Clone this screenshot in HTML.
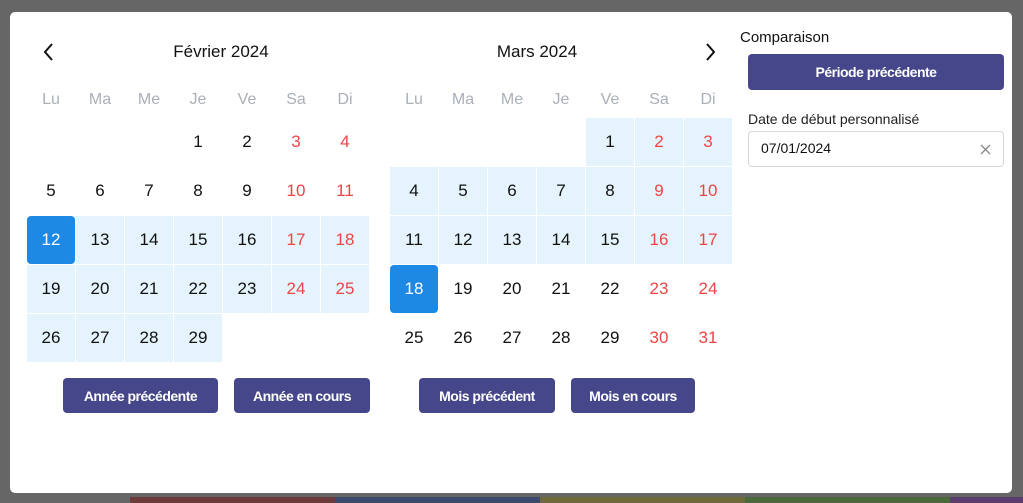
<!DOCTYPE html>
<html><head><meta charset="utf-8"><style>
*{box-sizing:border-box;margin:0;padding:0}
body{width:1023px;height:503px;background:#666;font-family:"Liberation Sans",sans-serif;position:relative;overflow:hidden}
.strip{position:absolute;top:497px;height:6px}
.modal{position:absolute;left:10px;top:12px;width:1002px;height:481px;background:#fff;border-radius:5px}
.a{position:absolute}
.title{font-size:17px;color:#111;text-align:center;width:200px}
.grid{position:absolute;display:grid;grid-template-columns:repeat(7,48px);grid-auto-rows:48px;gap:1px}
.grid div{display:flex;align-items:center;justify-content:center;font-size:17px;color:#111}
.hd{position:absolute;display:grid;grid-template-columns:repeat(7,48px);gap:1px}
.hd div{text-align:center;font-size:16px;color:#aab0b8}
.r{color:#ec4545!important}
.b{background:#e5f3fd}
.s{background:#1e88e5;color:#fff!important;border-radius:4px}
.btn{position:absolute;background:#46468a;color:#fff;border-radius:4px;font-size:14px;font-weight:bold;display:flex;align-items:center;justify-content:center;letter-spacing:-0.5px;top:378px;height:35px}
</style></head><body>
<div class="strip" style="left:130px;width:205px;background:#6e3a3c"></div>
<div class="strip" style="left:335px;width:205px;background:#3c4a6e"></div>
<div class="strip" style="left:540px;width:205px;background:#6e6a3a"></div>
<div class="strip" style="left:745px;width:205px;background:#4a6a3c"></div>
<div class="strip" style="left:950px;width:73px;background:#5a3c6e"></div>
<div class="modal"></div>
<svg class="a" style="left:42px;top:42px" width="14" height="20" viewBox="0 0 14 20"><path d="M10 2 L3 10 L10 18" fill="none" stroke="#111" stroke-width="2"/></svg>
<svg class="a" style="left:703px;top:42px" width="14" height="20" viewBox="0 0 14 20"><path d="M4 2 L11 10 L4 18" fill="none" stroke="#111" stroke-width="2"/></svg>
<div class="a title" style="left:121px;top:42px">Février 2024</div>
<div class="a title" style="left:437px;top:42px">Mars 2024</div>
<div class="hd" style="left:27px;top:91px"><div>Lu</div><div>Ma</div><div>Me</div><div>Je</div><div>Ve</div><div>Sa</div><div>Di</div></div>
<div class="hd" style="left:390px;top:91px"><div>Lu</div><div>Ma</div><div>Me</div><div>Je</div><div>Ve</div><div>Sa</div><div>Di</div></div>
<div class="grid" style="left:27px;top:118px">
<div></div><div></div><div></div><div>1</div><div>2</div><div class="r">3</div><div class="r">4</div>
<div>5</div><div>6</div><div>7</div><div>8</div><div>9</div><div class="r">10</div><div class="r">11</div>
<div class="s">12</div><div class="b">13</div><div class="b">14</div><div class="b">15</div><div class="b">16</div><div class="b r">17</div><div class="b r">18</div>
<div class="b">19</div><div class="b">20</div><div class="b">21</div><div class="b">22</div><div class="b">23</div><div class="b r">24</div><div class="b r">25</div>
<div class="b">26</div><div class="b">27</div><div class="b">28</div><div class="b">29</div>
</div>
<div class="grid" style="left:390px;top:118px">
<div></div><div></div><div></div><div></div><div class="b">1</div><div class="b r">2</div><div class="b r">3</div>
<div class="b">4</div><div class="b">5</div><div class="b">6</div><div class="b">7</div><div class="b">8</div><div class="b r">9</div><div class="b r">10</div>
<div class="b">11</div><div class="b">12</div><div class="b">13</div><div class="b">14</div><div class="b">15</div><div class="b r">16</div><div class="b r">17</div>
<div class="s">18</div><div>19</div><div>20</div><div>21</div><div>22</div><div class="r">23</div><div class="r">24</div>
<div>25</div><div>26</div><div>27</div><div>28</div><div>29</div><div class="r">30</div><div class="r">31</div>
</div>
<div class="btn" style="left:63px;width:155px">Année précédente</div>
<div class="btn" style="left:234px;width:136px">Année en cours</div>
<div class="btn" style="left:419px;width:136px">Mois précédent</div>
<div class="btn" style="left:571px;width:124px">Mois en cours</div>
<div class="a" style="left:740px;top:29px;font-size:15px;color:#111">Comparaison</div>
<div class="btn" style="left:748px;top:54px;width:256px;height:36px">Période précédente</div>
<div class="a" style="left:748px;top:111px;font-size:14px;color:#222">Date de début personnalisé</div>
<div class="a" style="left:748px;top:131px;width:256px;height:36px;border:1px solid #d5d8dc;border-radius:4px;font-size:14px;color:#111;padding:8px 0 0 12px">07/01/2024
<svg class="a" style="right:12px;top:12px" width="11" height="11" viewBox="0 0 11 11"><path d="M1 1L10 10M10 1L1 10" stroke="#888" stroke-width="1.3"/></svg></div>
</body></html>
